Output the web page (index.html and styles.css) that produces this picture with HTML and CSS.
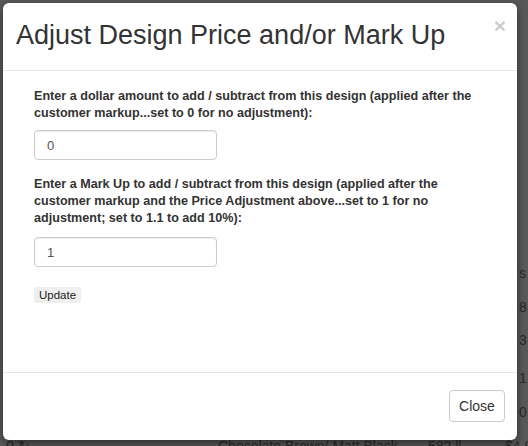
FILE: index.html
```html
<!DOCTYPE html>
<html lang="en">
<head>
  <meta charset="UTF-8">
  <meta name="viewport" content="width=device-width, initial-scale=1.0">
  <title>Adjust Design Price</title>
  <link rel="stylesheet" href="styles.css">
</head>
<body>

  <div class="page-behind">
    <div class="behind-col">
      <span class="b1">s</span>
      <span class="b2">8</span>
      <span class="b3">3</span>
      <span class="b4">1</span>
      <span class="b5">0</span>
    </div>
    <div class="behind-row">
      <span class="r1">0 &#8635;</span>
      <span class="r2">Chocolate Brown/ Matt Black</span>
      <span class="r3">582 ll</span>
      <span class="r4">$4.9</span>
    </div>
  </div>

  <div class="modal">
    <div class="modal-header">
      <h4 class="modal-title">Adjust Design Price and/or Mark Up</h4>
      <button class="close" type="button">&times;</button>
    </div>

    <div class="modal-body">
      <label class="field-label" for="price">Enter a dollar amount to add / subtract from this design (applied after the customer markup...set to 0 for no adjustment):</label>
      <input class="form-control" type="text" id="price" value="0">

      <label class="field-label second" for="markup">Enter a Mark Up to add / subtract from this design (applied after the customer markup and the Price Adjustment above...set to 1 for no adjustment; set to 1.1 to add 10%):</label>
      <input class="form-control lower" type="text" id="markup" value="1">

      <button class="update-btn" type="button">Update</button>
    </div>

    <div class="modal-footer">
      <button class="btn-close" type="button">Close</button>
    </div>
  </div>

</body>
</html>
```

FILE: styles.css
```css
html, body {
  margin: 0;
  padding: 0;
}
body {
  width: 528px;
  height: 446px;
  overflow: hidden;
  background-color: #595959;
  font-family: 'Liberation Sans', Arial, sans-serif;
  color: #333;
  position: relative;
}
.page-behind {
  position: absolute;
  inset: 0;
  color: #2a2a2a;
  font-size: 14px;
}
.behind-col span {
  position: absolute;
  left: 519px;
}
.b1 { top: 265px; }
.b2 { top: 299px; }
.b3 { top: 332px; }
.b4 { top: 370px; }
.b5 { top: 404px; }
.behind-row span {
  position: absolute;
  top: 438px;
  white-space: nowrap;
}
.r1 { left: 6px; }
.r2 { left: 218px; }
.r3 { left: 428px; }
.r4 { left: 505px; }

.modal {
  position: absolute;
  left: 3px;
  top: 3px;
  width: 514px;
  height: 437px;
  background-color: #fff;
  border-radius: 6px;
  box-shadow: 0 3px 9px rgba(0, 0, 0, 0.5);
  display: flex;
  flex-direction: column;
}
.modal-header {
  height: 67px;
  border-bottom: 1px solid #e5e5e5;
  padding: 0 11px 0 13px;
  display: flex;
  align-items: flex-start;
  justify-content: space-between;
}
.modal-title {
  margin: 17px 0 0;
  font-size: 27px;
  font-weight: normal;
  line-height: 30px;
  color: #333;
}
.close {
  margin-top: 12px;
  padding: 0;
  border: none;
  background: none;
  font-family: 'Liberation Sans', Arial, sans-serif;
  font-size: 21px;
  font-weight: bold;
  line-height: 1;
  color: #000;
  opacity: 0.2;
  cursor: pointer;
}
.modal-body {
  flex: 1;
  padding: 17px 31px 0;
}
.field-label {
  display: block;
  font-size: 12.6px;
  font-weight: bold;
  line-height: 17px;
  max-width: 450px;
}
.second {
  margin-top: 16px;
}
.form-control {
  display: block;
  box-sizing: border-box;
  width: 183px;
  height: 30px;
  margin-top: 8px;
  padding: 4px 12px;
  font-family: 'Liberation Sans', Arial, sans-serif;
  font-size: 13px;
  color: #555;
  border: 1px solid #ccc;
  border-radius: 4px;
  box-shadow: inset 0 1px 1px rgba(0, 0, 0, 0.075);
}
.lower {
  margin-top: 10px;
}
.update-btn {
  display: block;
  margin-top: 20px;
  padding: 2px 5px;
  font-family: 'Liberation Sans', Arial, sans-serif;
  font-size: 11.5px;
  color: #222;
  background-color: #efefef;
  border: none;
  border-radius: 2px;
}
.modal-footer {
  height: 67px;
  border-top: 1px solid #e5e5e5;
  display: flex;
  justify-content: flex-end;
  align-items: flex-start;
  padding: 0 12px 0 0;
}
.btn-close {
  margin-top: 17px;
  width: 56px;
  height: 32px;
  font-family: 'Liberation Sans', Arial, sans-serif;
  font-size: 14px;
  color: #333;
  background-color: #fff;
  border: 1px solid #ccc;
  border-radius: 4px;
  cursor: pointer;
}
```
